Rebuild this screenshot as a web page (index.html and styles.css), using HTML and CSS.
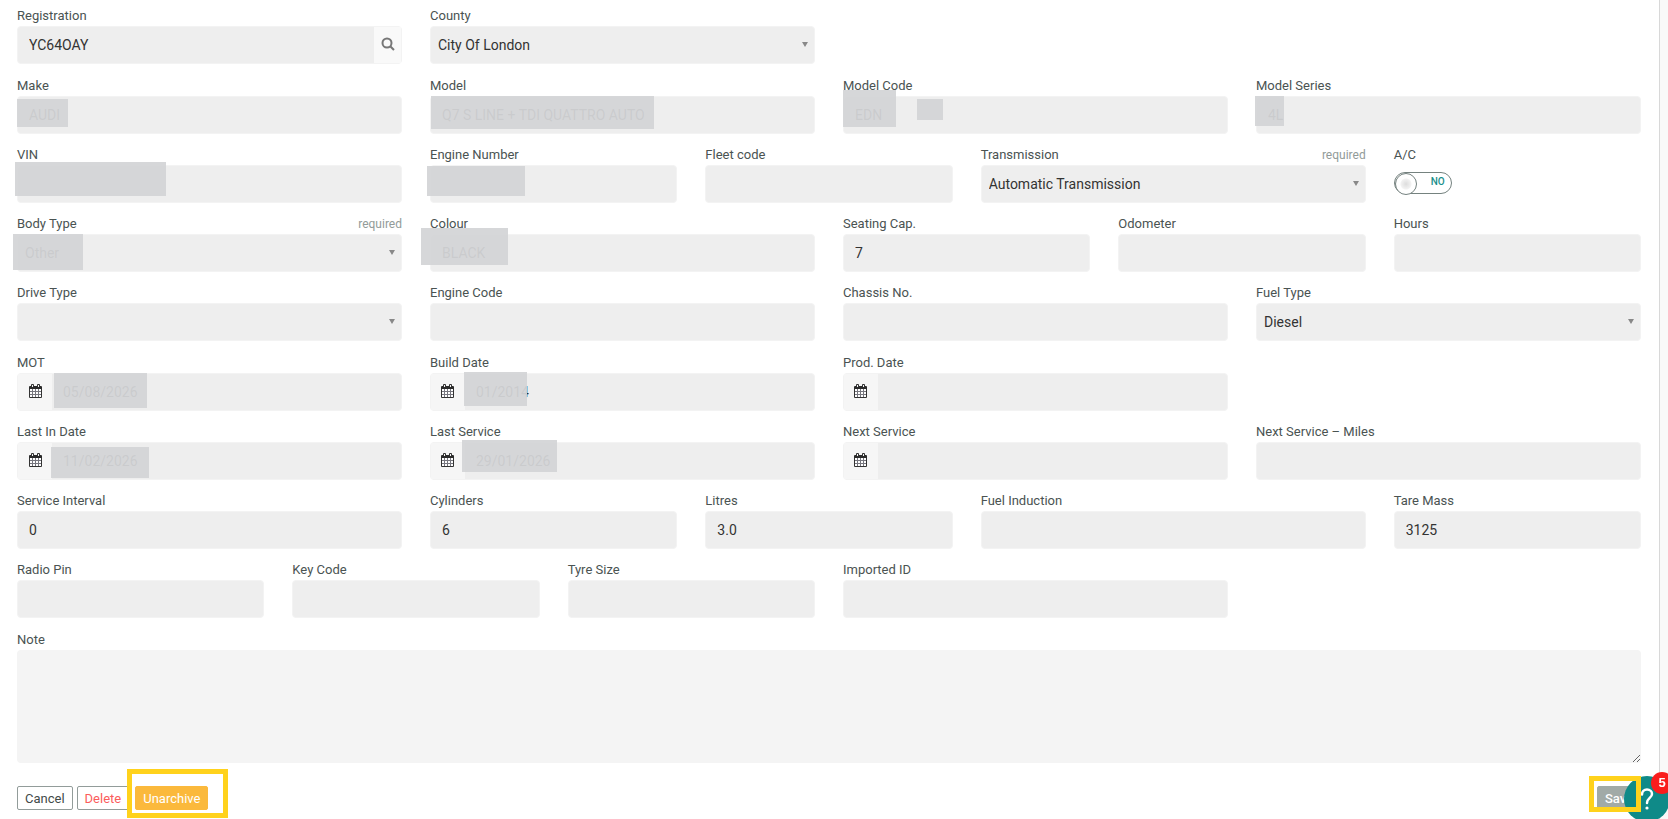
FILE: index.html
```html
<!DOCTYPE html>
<html lang="en">
<head>
    <meta charset="UTF-8">
    <title>Vehicle</title>
    <link rel="stylesheet" href="styles.css">
</head>
<body>
    <svg class="sprite" aria-hidden="true">
        <symbol id="icon-calendar" viewBox="0 0 13 14">
            <path fill="#fff" d="M0 4h13v10H0z"/>
            <path fill="none" stroke="#77777f" d="M3.5 5v8M6.500 5v8M9.500 5v8M1 7.500h11M1 10.500h11"/>
            <path fill="none" stroke="#333" d="M.5 4v9.500h12V4"/>
            <path fill="#2b2b2b" d="M1 2h1v1h3V2h3v1h3V2h1q1 0 1 1v2H0V3q0-1 1-1z"/>
            <path fill="none" stroke="#333" d="M2.500 3V.5h2V3M8.500 3V.5h2V3"/>
        </symbol>
    </svg>

    <form class="panel">
        <div class="section">
            <div class="field wide">
                <label for="registration">Registration</label>
                <div class="control search">
                    <input type="text" id="registration" value="YC64OAY">
                    <button type="button" class="search-button" aria-label="Search">
                        <svg width="14" height="14" viewBox="0 0 14 14" fill="none" stroke="#777" stroke-width="2">
                            <circle cx="6" cy="6" r="4.5"/>
                            <path d="M9.2 9.2 L13 13"/>
                        </svg>
                    </button>
                </div>
            </div>
            <div class="field wide">
                <label for="county">County</label>
                <div class="control drop"><select id="county"><option>City Of London</option></select></div>
            </div>
        </div>

        <div class="section">
            <div class="field wide">
                <label for="make">Make</label>
                <div class="control"><input type="text" id="make" value="AUDI"><span class="mask mask-make"></span></div>
            </div>
            <div class="field wide">
                <label for="model">Model</label>
                <div class="control"><input type="text" id="model" value="Q7 S LINE + TDI QUATTRO AUTO"><span class="mask mask-model"></span></div>
            </div>
            <div class="field wide">
                <label for="modelCode">Model Code</label>
                <div class="control"><input type="text" id="modelCode" value="EDN"><span class="mask mask-code"></span><span class="mask mask-code-end"></span></div>
            </div>
            <div class="field wide">
                <label for="modelSeries">Model Series</label>
                <div class="control"><input type="text" id="modelSeries" value="4L"><span class="mask mask-series"></span></div>
            </div>

            <div class="field wide">
                <label for="vin">VIN</label>
                <div class="control"><input type="text" id="vin"><span class="mask mask-vin"></span></div>
            </div>
            <div class="field">
                <label for="engineNumber">Engine Number</label>
                <div class="control"><input type="text" id="engineNumber"><span class="mask mask-engine"></span></div>
            </div>
            <div class="field">
                <label for="fleetCode">Fleet code</label>
                <div class="control"><input type="text" id="fleetCode"></div>
            </div>
            <div class="field wide">
                <div class="label-row"><label for="transmission">Transmission</label><span class="required">required</span></div>
                <div class="control drop"><select id="transmission"><option>Automatic Transmission</option></select></div>
            </div>
            <div class="field">
                <label for="ac">A/C</label>
                <div class="switch">
                    <input type="checkbox" id="ac">
                    <span class="switch-text">NO</span>
                </div>
            </div>

            <div class="field wide">
                <div class="label-row"><label for="bodyType">Body Type</label><span class="required">required</span></div>
                <div class="control drop"><select id="bodyType"><option>Other</option></select><span class="mask mask-body"></span></div>
            </div>
            <div class="field wide">
                <label for="colour">Colour</label>
                <div class="control"><input type="text" id="colour" value="BLACK"><span class="mask mask-colour"></span></div>
            </div>
            <div class="field">
                <label for="seating">Seating Cap.</label>
                <div class="control"><input type="text" id="seating" value="7"></div>
            </div>
            <div class="field">
                <label for="odometer">Odometer</label>
                <div class="control"><input type="text" id="odometer"></div>
            </div>
            <div class="field">
                <label for="hours">Hours</label>
                <div class="control"><input type="text" id="hours"></div>
            </div>

            <div class="field wide">
                <label for="driveType">Drive Type</label>
                <div class="control drop"><select id="driveType"><option></option></select></div>
            </div>
            <div class="field wide">
                <label for="engineCode">Engine Code</label>
                <div class="control"><input type="text" id="engineCode"></div>
            </div>
            <div class="field wide">
                <label for="chassis">Chassis No.</label>
                <div class="control"><input type="text" id="chassis"></div>
            </div>
            <div class="field wide">
                <label for="fuelType">Fuel Type</label>
                <div class="control drop"><select id="fuelType"><option>Diesel</option></select></div>
            </div>
        </div>

        <div class="section">
            <div class="field wide">
                <label for="mot">MOT</label>
                <div class="control date">
                    <span class="addon"><svg width="13" height="14"><use href="#icon-calendar"/></svg></span>
                    <input type="text" id="mot" value="05/08/2026"><span class="mask mask-mot"></span>
                </div>
            </div>
            <div class="field wide">
                <label for="buildDate">Build Date</label>
                <div class="control date">
                    <span class="addon"><svg width="13" height="14"><use href="#icon-calendar"/></svg></span>
                    <input type="text" id="buildDate" value="01/2014"><span class="mask mask-build"></span>
                </div>
            </div>
            <div class="field wide">
                <label for="prodDate">Prod. Date</label>
                <div class="control date">
                    <span class="addon"><svg width="13" height="14"><use href="#icon-calendar"/></svg></span>
                    <input type="text" id="prodDate">
                </div>
            </div>

            <div class="field wide row-start">
                <label for="lastIn">Last In Date</label>
                <div class="control date">
                    <span class="addon"><svg width="13" height="14"><use href="#icon-calendar"/></svg></span>
                    <input type="text" id="lastIn" value="11/02/2026"><span class="mask mask-last-in"></span>
                </div>
            </div>
            <div class="field wide">
                <label for="lastService">Last Service</label>
                <div class="control date">
                    <span class="addon"><svg width="13" height="14"><use href="#icon-calendar"/></svg></span>
                    <input type="text" id="lastService" value="29/01/2026"><span class="mask mask-last-service"></span>
                </div>
            </div>
            <div class="field wide">
                <label for="nextService">Next Service</label>
                <div class="control date">
                    <span class="addon"><svg width="13" height="14"><use href="#icon-calendar"/></svg></span>
                    <input type="text" id="nextService">
                </div>
            </div>
            <div class="field wide">
                <label for="nextMiles">Next Service – Miles</label>
                <div class="control"><input type="text" id="nextMiles"></div>
            </div>

            <div class="field wide">
                <label for="interval">Service Interval</label>
                <div class="control"><input type="text" id="interval" value="0"></div>
            </div>
            <div class="field">
                <label for="cylinders">Cylinders</label>
                <div class="control"><input type="text" id="cylinders" value="6"></div>
            </div>
            <div class="field">
                <label for="litres">Litres</label>
                <div class="control"><input type="text" id="litres" value="3.0"></div>
            </div>
            <div class="field wide">
                <label for="induction">Fuel Induction</label>
                <div class="control"><input type="text" id="induction"></div>
            </div>
            <div class="field">
                <label for="tare">Tare Mass</label>
                <div class="control"><input type="text" id="tare" value="3125"></div>
            </div>

            <div class="field">
                <label for="radioPin">Radio Pin</label>
                <div class="control"><input type="text" id="radioPin"></div>
            </div>
            <div class="field">
                <label for="keyCode">Key Code</label>
                <div class="control"><input type="text" id="keyCode"></div>
            </div>
            <div class="field">
                <label for="tyreSize">Tyre Size</label>
                <div class="control"><input type="text" id="tyreSize"></div>
            </div>
            <div class="field wide">
                <label for="importedId">Imported ID</label>
                <div class="control"><input type="text" id="importedId"></div>
            </div>
        </div>

        <div class="note">
            <label for="note">Note</label>
            <textarea id="note"></textarea>
        </div>

        <div class="actions">
            <button type="button" class="button plain">Cancel</button>
            <button type="button" class="button plain delete">Delete</button>
            <div class="marked marked-unarchive">
                <button type="button" class="button unarchive">Unarchive</button>
            </div>
            <div class="marked marked-save">
                <button type="submit" class="button save">Save</button>
            </div>
        </div>
    </form>

    <button type="button" class="help" aria-label="Help">
        <svg width="14" height="22" viewBox="0 0 14 22" fill="none" stroke="#fff" stroke-width="2.5" stroke-linecap="round">
            <path d="M2 6.500C2 3.500 4 1.500 7 1.500s5 2 5 4.500c0 4-5 4-5 9"/>
            <circle cx="7" cy="20" r="1.600" fill="#fff" stroke="none"/>
        </svg>
        <span class="badge">5</span>
    </button>
</body>
</html>
```

FILE: styles.css
```css
* {
    box-sizing: border-box;
}
body {
    margin: 0;
    padding-right: 8px;
    background: #f9f9f9;
    font-family: Roboto, "Liberation Sans", sans-serif;
    font-size: 13px;
    color: #4a5352;
    overflow: hidden;
}
.sprite {
    display: none;
}
.panel {
    display: flex;
    flex-direction: column;
    gap: 12px;
    min-height: 100vh;
    padding: 6px 18px 0 17px;
    background: #fff;
    border-right: 1px solid #d8d8d8;
}
.section {
    display: grid;
    grid-template-columns: repeat(12, 1fr);
    gap: 11px 28px;
}
.field {
    grid-column: span 2;
    min-width: 0;
}
.field.wide {
    grid-column: span 3;
}
.field.row-start {
    grid-column: 1 / span 3;
}
label {
    display: block;
    line-height: 20px;
}
.label-row {
    display: flex;
    justify-content: space-between;
}
.required {
    font-size: 12px;
    line-height: 20px;
    color: #929b99;
}
.control {
    position: relative;
    display: flex;
    height: 38px;
    background: #eee;
    border: 1px solid #f3f3f3;
    border-radius: 4px;
}
.control input,
.control select {
    flex: 1;
    min-width: 0;
    padding: 0 11px;
    border: none;
    background: none;
    font-family: inherit;
    font-size: 14px;
    color: #333;
}
.control select {
    appearance: none;
    padding: 0 7px;
}
.drop::after {
    content: "";
    position: absolute;
    right: 6px;
    top: 15px;
    border: 3px solid transparent;
    border-top: 5px solid #888;
    border-bottom: none;
}
.search-button {
    width: 27px;
    padding: 0;
    border: none;
    background: #f9f9f9;
}
.addon {
    display: flex;
    align-items: center;
    justify-content: center;
    width: 34px;
    padding-bottom: 2px;
    background: #f6f6f6;
}
.mask {
    position: absolute;
    background: rgba(211, 213, 215, 0.94);
}
.mask-make { left: -1px; top: 2px; width: 51px; height: 28px; }
.mask-model { left: 0; top: -1px; width: 223px; height: 33px; }
.mask-code { left: -1px; top: -7px; width: 53px; height: 37px; }
.mask-code-end { left: 73px; top: 2px; width: 26px; height: 21px; }
.mask-series { left: -2px; top: -1px; width: 29px; height: 30px; }
.mask-vin { left: -3px; top: -4px; width: 151px; height: 34px; }
.mask-engine { left: -4px; top: 0; width: 98px; height: 30px; }
.mask-body { left: -5px; top: -1px; width: 70px; height: 36px; }
.mask-colour { left: -10px; top: -7px; width: 87px; height: 37px; }
.mask-mot { left: 36px; top: -1px; width: 93px; height: 35px; }
.mask-build { left: 33px; top: -2px; width: 63px; height: 34px; }
.mask-last-in { left: 33px; top: 4px; width: 98px; height: 31px; }
.mask-last-service { left: 31px; top: -3px; width: 95px; height: 32px; }
.switch {
    position: relative;
    width: 58px;
    height: 22px;
    margin-top: 7px;
}
.switch input {
    appearance: none;
    display: block;
    width: 58px;
    height: 22px;
    margin: 0;
    border: 1px solid #75827f;
    border-radius: 11px;
}
.switch input::before {
    content: "";
    display: block;
    width: 20px;
    height: 20px;
    border: 1px solid #75827f;
    border-radius: 50%;
    background: radial-gradient(circle, #ddd 0, #f2f2f2 5px, #fff 6px);
}
.switch-text {
    position: absolute;
    right: 7px;
    top: 2px;
    font-size: 10px;
    font-weight: 500;
    line-height: 15px;
    color: #198f8b;
    pointer-events: none;
}
.note textarea {
    display: block;
    width: 100%;
    height: 113px;
    border: none;
    border-radius: 4px;
    background: #f4f4f4;
    resize: vertical;
}
.actions {
    display: flex;
    align-items: flex-start;
    gap: 4px;
    margin-top: -6px;
}
.button {
    height: 24px;
    padding: 0 7px;
    border: 1px solid #929c9a;
    border-radius: 2px;
    background: #fff;
    font-family: inherit;
    font-size: 13px;
    color: #414a49;
}
.plain {
    margin-top: 17px;
}
.delete {
    color: #fb5c5c;
}
/* yellow highlight frames */
.marked {
    position: relative;
}
.marked::after {
    content: "";
    position: absolute;
    inset: 0;
    z-index: 3;
    border: 5px solid #ffd21c;
    pointer-events: none;
}
.marked-unarchive {
    height: 49px;
    margin-left: -6px;
    padding: 17px 20px 0 8px;
}
.marked-save {
    width: 52px;
    height: 36px;
    margin: 7px 0 0 auto;
    padding: 10px 0 0 8px;
}
.unarchive {
    border-color: #fbb93c;
    background: #fbb93c;
    color: #fff;
}
.save {
    border-color: #a1aaa7;
    background: #a1aaa7;
    font-weight: 500;
    color: #fff;
}
.help {
    position: fixed;
    right: -2px;
    bottom: -3px;
    z-index: 2;
    width: 46px;
    height: 46px;
    padding: 0;
    border: none;
    border-radius: 50%;
    background: #0f8a88;
}
.help svg {
    display: block;
    margin: 0 auto;
}
.badge {
    position: absolute;
    right: -3px;
    top: -4px;
    width: 22px;
    height: 22px;
    border-radius: 50%;
    background: #f91d1d;
    font-family: "Liberation Sans", sans-serif;
    font-size: 13px;
    font-weight: bold;
    line-height: 22px;
    color: #fff;
}
```
